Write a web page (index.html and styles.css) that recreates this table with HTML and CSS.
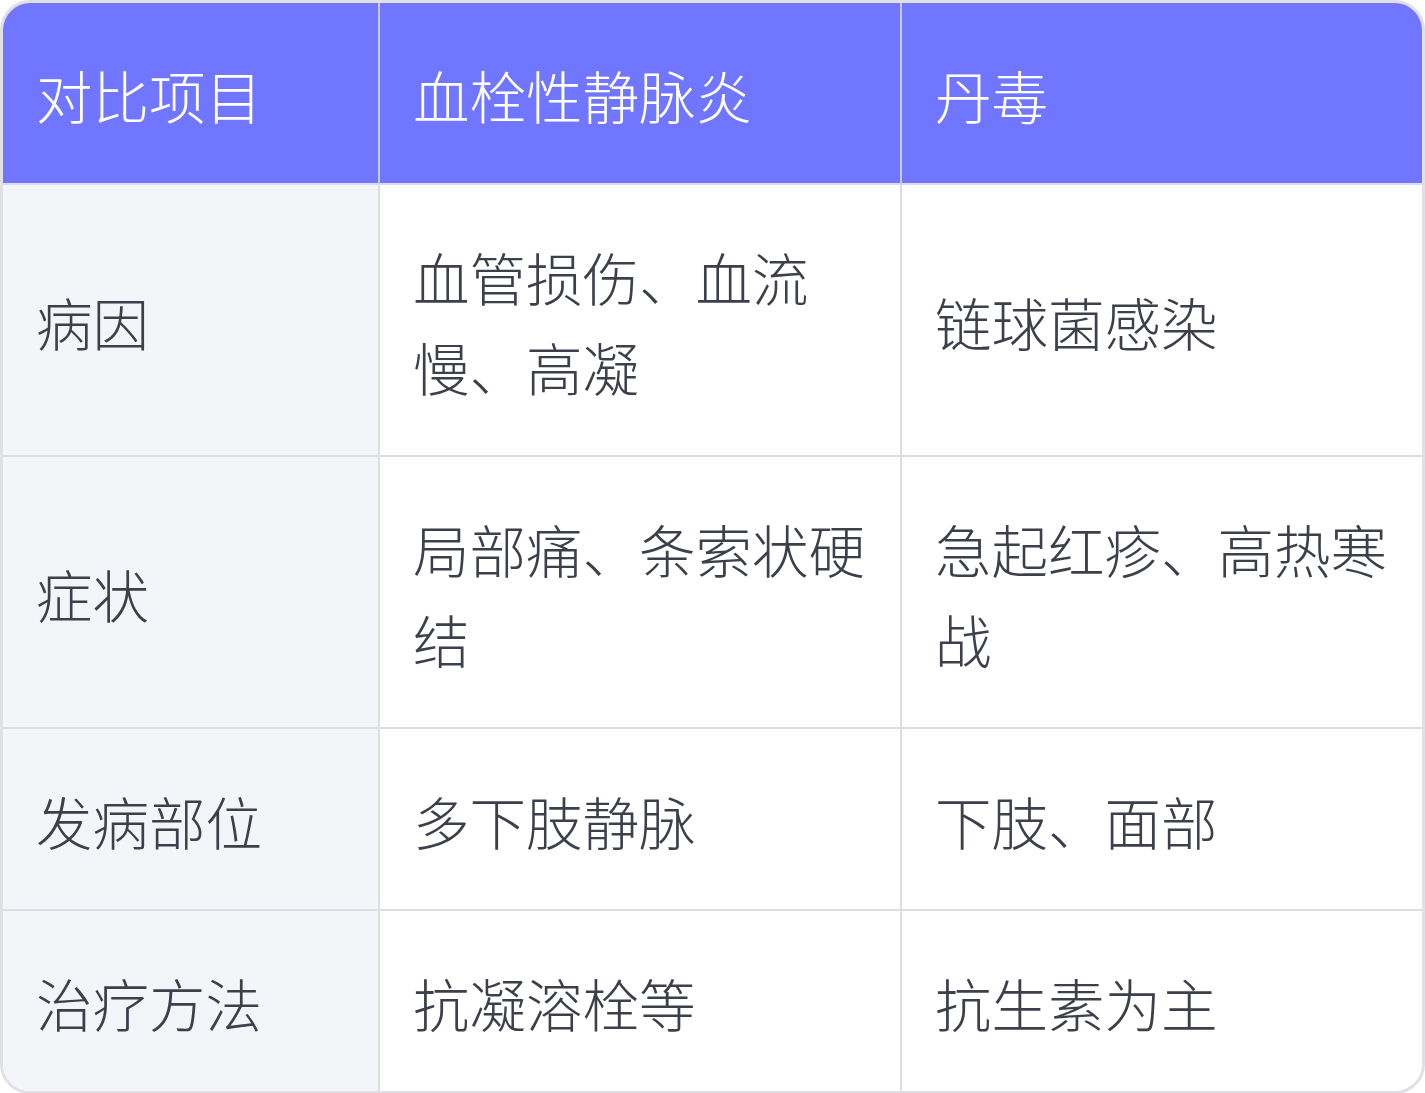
FILE: index.html
```html
<!DOCTYPE html>
<html lang="zh-CN">
<head>
<meta charset="utf-8">
<link rel="stylesheet" href="styles.css">
</head>
<body>
<div class="wrap">
<table class="cmp">
  <colgroup><col class="c1"><col class="c2"><col class="c3"></colgroup>
  <thead>
    <tr><th>对比项目</th><th>血栓性静脉炎</th><th>丹毒</th></tr>
  </thead>
  <tbody>
    <tr><td>病因</td><td>血管损伤、血流慢、高凝</td><td>链球菌感染</td></tr>
    <tr><td>症状</td><td>局部痛、条索状硬结</td><td>急起红疹、高热寒战</td></tr>
    <tr><td>发病部位</td><td>多下肢静脉</td><td>下肢、面部</td></tr>
    <tr><td>治疗方法</td><td>抗凝溶栓等</td><td>抗生素为主</td></tr>
  </tbody>
</table>
</div>
</body>
</html>
```
FILE: styles.css
```css
html, body { margin: 0; padding: 0; background: #ffffff; }
.wrap {
  width: 1425px;
  box-sizing: border-box;
  border: 3px solid #e1e1e4;
  border-radius: 30px;
  overflow: hidden;
}
.cmp {
  width: 100%;
  border-collapse: separate;
  border-spacing: 0;
  table-layout: fixed;
  font-family: "Noto Sans CJK SC", "Noto Sans", sans-serif;
  font-weight: 300;
  font-size: 56.5px;
  line-height: 90px;
  color: #3d404b;
}
.c1 { width: 377px; }
.c2 { width: 522px; }
.c3 { width: 520px; }
.cmp th, .cmp td {
  padding: 46px 32px 44px 33px;
  text-align: left;
  vertical-align: middle;
  border-right: 2px solid #dddde3;
  border-bottom: 2px solid #dddde3;
  font-weight: 300;
}
.cmp th:last-child, .cmp td:last-child { border-right: none; }
.cmp tbody tr:last-child td { border-bottom: none; }
.cmp th {
  background: #7076ff;
  color: #ffffff;
  border-right-color: #c7c9f0;
}
.cmp td:first-child { background: #f4f5f9; }
```
